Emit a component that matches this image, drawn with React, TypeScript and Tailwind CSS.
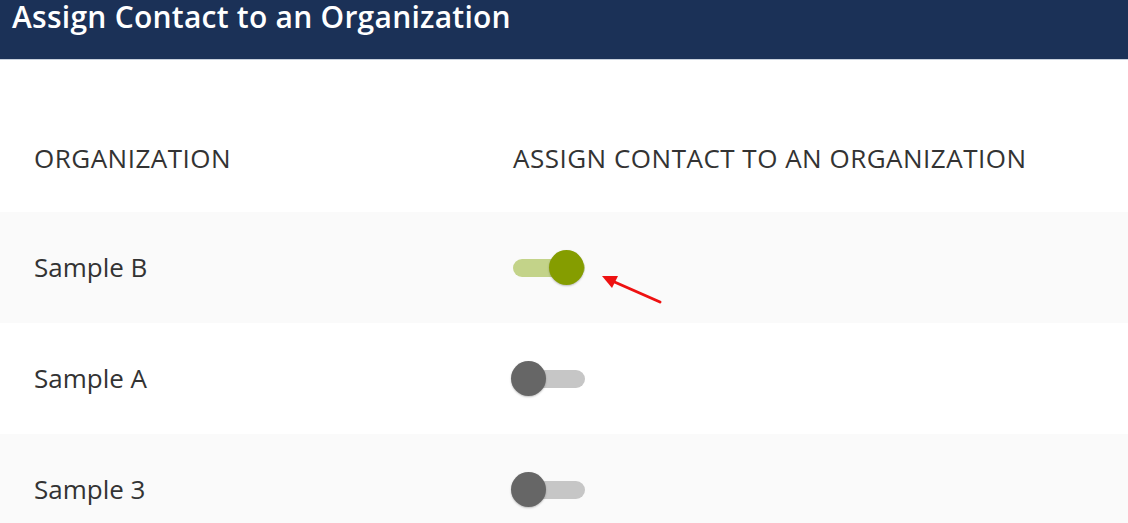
import React from "react";

type Org = { name: string; assigned: boolean };

const orgs: Org[] = [
  { name: "Sample B", assigned: true },
  { name: "Sample A", assigned: false },
  { name: "Sample 3", assigned: false },
];

function Toggle({ on }: { on: boolean }) {
  return (
    <div className="relative h-[35px] w-[76px] flex items-center">
      <div
        className={`ml-[2px] h-[18px] w-[72px] rounded-full ${
          on ? "bg-[#c3d389]" : "bg-[#c6c6c6]"
        }`}
      />
      <div
        className={`absolute top-0 h-[35px] w-[35px] rounded-full shadow-[0_1px_2px_rgba(0,0,0,0.25)] ${
          on ? "left-[38px] bg-[#859d00]" : "left-0 bg-[#666666]"
        }`}
      />
    </div>
  );
}

export default function App() {
  return (
    <div className="relative h-[523px] w-[1128px] overflow-hidden bg-white font-['Open_Sans',sans-serif] text-[#333333]">
      {/* Header */}
      <div className="h-[60px] border-b border-[#c9d1dd] bg-[#1b3157] pl-[12px]">
        <h1 className="text-[30px] font-semibold leading-[34px] tracking-[0.25px] text-white">
          Assign Contact to an Organization
        </h1>
      </div>

      {/* Column headers */}
      <div className="grid h-[152px] grid-cols-[479px_1fr] items-center pl-[34px] pt-[44px] text-[26px] tracking-[0.5px]">
        <div>ORGANIZATION</div>
        <div>ASSIGN CONTACT TO AN ORGANIZATION</div>
      </div>

      {/* Rows */}
      {orgs.map((org, i) => (
        <div
          key={org.name}
          className={`grid h-[111px] grid-cols-[477px_1fr] items-center pl-[34px] ${
            i % 2 === 0 ? "bg-[#fafafa]" : "bg-white"
          }`}
        >
          <div className="text-[26px]">{org.name}</div>
          <Toggle on={org.assigned} />
        </div>
      ))}

      {/* annotation arrow */}
      <svg
        className="absolute left-[596px] top-[268px]"
        width="70"
        height="40"
        viewBox="0 0 70 40"
      >
        <line x1="64" y1="34" x2="14" y2="12" stroke="#ee1111" strokeWidth="3" strokeLinecap="round" />
        <polygon points="6,8 22,8 16,20" fill="#ee1111" />
      </svg>
    </div>
  );
}
